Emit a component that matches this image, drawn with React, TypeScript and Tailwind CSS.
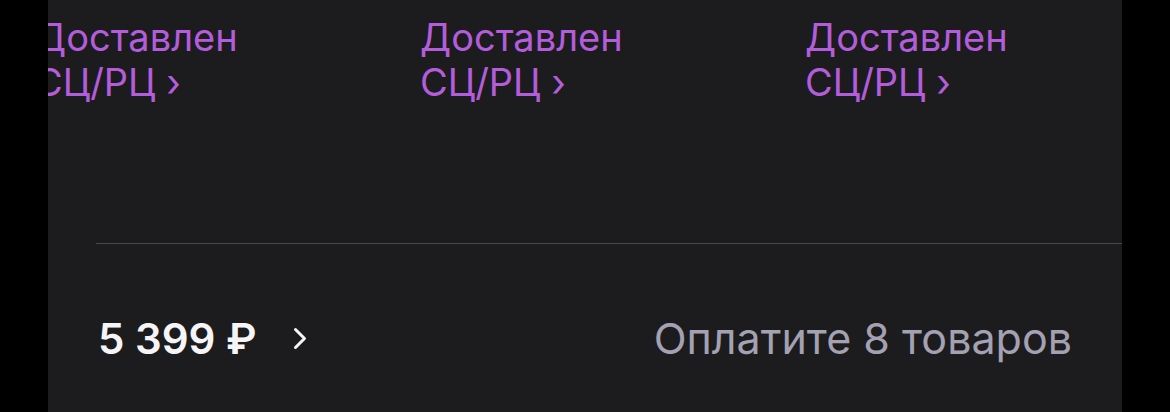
const statuses = ["Доставлен", "Доставлен", "Доставлен"];

export default function App() {
  return (
    <div className="flex h-[412px] w-[1170px] justify-center bg-black font-['Inter',sans-serif]">
      <div className="flex w-[1074px] flex-col overflow-hidden bg-[#1c1c1e]">
        <div className="-ml-[13px] flex pt-[15px]">
          {statuses.map((s, i) => (
            <div key={i} className="w-[385px] shrink-0 text-[38px] leading-[45px] text-[#b45ddc]">
              <p className="whitespace-nowrap">{s}</p>
              <p className="whitespace-nowrap">СЦ/РЦ ›</p>
            </div>
          ))}
        </div>
        <div className="ml-[48px] mt-[138px] h-px bg-[#48484b]" />
        <div className="flex items-center justify-between pl-[50px] pr-[50px] pt-[73px]">
          <div className="flex items-center gap-[36px]">
            <span className="text-[42px] font-semibold leading-none text-[#f5f5f7]">5 399 ₽</span>
            <svg width="14" height="23" viewBox="0 0 14 23" fill="none">
              <path d="M2.5 2.5l9 9-9 9" stroke="#f5f5f7" strokeWidth="3" strokeLinecap="round" strokeLinejoin="round" />
            </svg>
          </div>
          <span className="text-[43px] leading-none text-[#a3a1b2]">Оплатите 8 товаров</span>
        </div>
      </div>
    </div>
  );
}
